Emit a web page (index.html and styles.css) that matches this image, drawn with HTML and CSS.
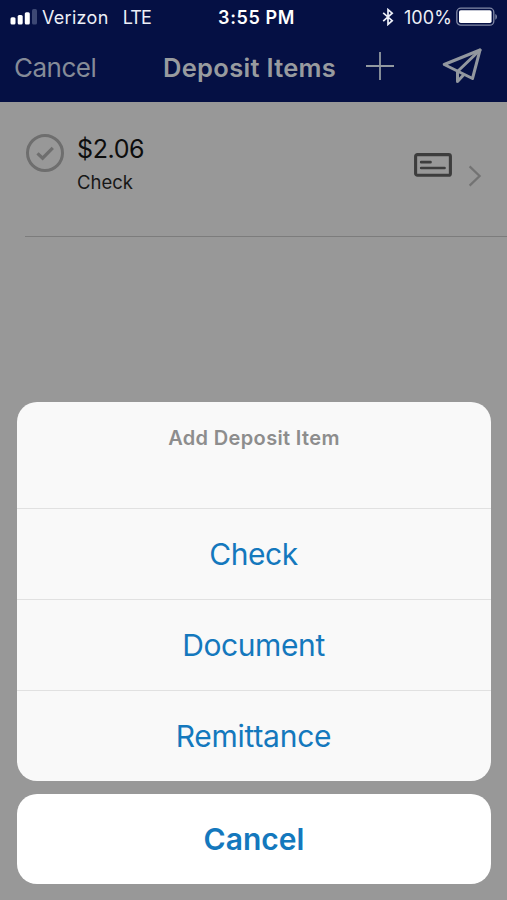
FILE: index.html
```html
<!DOCTYPE html>
<html lang="en">
<head>
<meta charset="utf-8">
<title>Deposit Items</title>
<link rel="stylesheet" href="styles.css">
</head>
<body>
<div class="screen">
  <header class="header">
    <div class="status">
      <div class="status-left">
        <svg class="signal" width="28" height="18" viewBox="0 0 28 18">
          <rect x="0.5" y="9.3" width="5" height="7.2" rx="1.5" fill="#fff"/>
          <rect x="7.7" y="7" width="5" height="9.5" rx="1.5" fill="#fff"/>
          <rect x="14.8" y="4.2" width="5" height="12.3" rx="1.5" fill="#fff"/>
          <rect x="22" y="1" width="5" height="15.5" rx="1.5" fill="#3d4874"/>
        </svg>
        <span class="carrier">Verizon</span>
        <span class="network">LTE</span>
      </div>
      <span class="time">3:55 PM</span>
      <div class="status-right">
        <svg class="bluetooth" width="12" height="18" viewBox="0 0 12 18" fill="none" stroke="#eef0f8" stroke-width="1.7">
          <path d="M1.2 4.8 10.2 12.7 6 16.4V1.6l4.2 3.600L1.2 13.2"/>
        </svg>
        <span class="percent">100%</span>
        <svg class="battery" width="42" height="20" viewBox="0 0 42 20">
          <rect x="0.8" y="1.2" width="37" height="17" rx="4" fill="none" stroke="#8289a6" stroke-width="1.3"/>
          <rect x="3" y="3.3" width="32.6" height="12.8" rx="1.8" fill="#fff"/>
          <path d="M39.3 7c2.2.6 2.2 5 0 5.700z" fill="#8289a6"/>
        </svg>
      </div>
    </div>
    <nav class="nav">
      <span class="nav-cancel">Cancel</span>
      <h1 class="title">Deposit Items</h1>
      <svg class="plus" width="28" height="28" viewBox="0 0 28 28" stroke="#9299a0" stroke-width="1.8">
        <path d="M14 0v28M0 14h28"/>
      </svg>
      <svg class="send" width="40" height="38" viewBox="0 0 40 38" fill="none" stroke="#92979f" stroke-width="3" stroke-linejoin="round" stroke-linecap="round">
        <path d="M38 3 2.200 17.500 30.500 31.500Z"/>
        <path d="M38 3 15.500 24.500V34.500L21.500 28"/>
      </svg>
    </nav>
  </header>
  <main class="list">
    <div class="item">
      <svg class="tick" width="40" height="40" viewBox="0 0 40 40" fill="none" stroke="#6e6e6e">
        <circle cx="20" cy="20" r="17.500" stroke-width="3"/>
        <path d="M12.500 20.300 17.600 25.200 27.800 14.800" stroke-width="3.200"/>
      </svg>
      <div class="item-text">
        <span class="amount">$2.06</span>
        <span class="kind">Check</span>
      </div>
      <svg class="card" width="40" height="26" viewBox="0 0 40 26" fill="none" stroke="#3d3d3d">
        <rect x="2.600" y="2.600" width="34.800" height="20.600" rx="1.800" stroke-width="3.100"/>
        <path d="M8.200 10.200h9.300M8.200 16h23.300" stroke-width="2.700" stroke-linecap="round"/>
      </svg>
      <svg class="chevron" width="14" height="22" viewBox="0 0 14 22" fill="none" stroke="#737373" stroke-width="2.200">
        <path d="M1.600 1.400 11.600 11 1.600 20.600"/>
      </svg>
    </div>
  </main>
  <section class="sheet">
    <div class="group">
      <div class="sheet-title"><span>Add Deposit Item</span></div>
      <div class="option"><span>Check</span></div>
      <div class="option"><span>Document</span></div>
      <div class="option"><span>Remittance</span></div>
    </div>
    <div class="dismiss"><span>Cancel</span></div>
  </section>
</div>
</body>
</html>
```
FILE: styles.css
```css
* { box-sizing: border-box; }
body { margin: 0; font-family: Inter, "Liberation Sans", sans-serif; }
svg { display: block; flex: none; }
.screen {
  width: 507px;
  height: 900px;
  background: #989898;
  display: flex;
  flex-direction: column;
  overflow: hidden;
  white-space: nowrap;
}
.header { height: 102px; background: #051044; flex: none; }
.status {
  height: 34px;
  display: grid;
  grid-template-columns: 1fr auto 1fr;
  align-items: center;
  color: #edeff7;
  font-size: 18px;
}
.status-left, .status-right { display: flex; align-items: center; }
.status-left { padding-left: 10px; }
.status-right { justify-content: flex-end; padding-right: 9px; }
.signal { margin-right: 4px; }
.carrier { letter-spacing: 0.3px; }
.network { margin-left: 14px; letter-spacing: -0.9px; }
.time { font-weight: 600; color: #fff; padding-left: 6px; letter-spacing: 0.6px; }
.bluetooth { margin-right: 10px; }
.percent { letter-spacing: 0.1px; }
.battery { margin-left: 4px; }
.nav {
  height: 68px;
  display: flex;
  align-items: center;
  padding: 0 0 2px 14px;
  color: #989b9f;
}
.nav-cancel { font-size: 26px; width: 149px; color: #858b98; letter-spacing: -0.5px; }
.title { margin: 0; font-size: 25.5px; font-weight: 600; width: 203px; letter-spacing: 0.3px; }
.plus { margin-top: -2px; }
.send { margin: -2px 0 0 48px; }
.item {
  height: 135px;
  margin-left: 25px;
  border-bottom: 1px solid #7c7c7c;
  display: flex;
  align-items: flex-start;
}
.tick { margin-top: 31px; }
.item-text { display: flex; flex-direction: column; margin: 32px 0 0 12px; width: 336px; color: #0d0d0d; }
.amount { font-size: 25px; line-height: 30px; letter-spacing: -0.4px; }
.kind { font-size: 18.5px; line-height: 24px; margin-top: 6px; color: #171717; }
.card { margin-top: 50px; }
.chevron { margin: 63px 0 0 15px; }
.sheet { margin: 165px 16px 0 17px; }
.group { height: 379px; border-radius: 20px; background: #f9f9f9; overflow: hidden; }
.sheet-title {
  height: 106px;
  padding-top: 23px;
  text-align: center;
  font-size: 20px;
  line-height: 26px;
  font-weight: 600;
  letter-spacing: 0.35px;
  color: #8d8d8d;
}
.option {
  height: 91px;
  border-top: 1px solid #e1e1e1;
  display: flex;
  align-items: center;
  justify-content: center;
  font-size: 30px;
  letter-spacing: -0.4px;
  padding-right: 1px;
  color: #1478bd;
}
.option:last-child { letter-spacing: -0.25px; }
.dismiss {
  height: 90px;
  margin-top: 13px;
  border-radius: 20px;
  background: #fff;
  display: flex;
  align-items: center;
  justify-content: center;
  font-size: 30px;
  font-weight: 600;
  color: #1478bd;
}
```
